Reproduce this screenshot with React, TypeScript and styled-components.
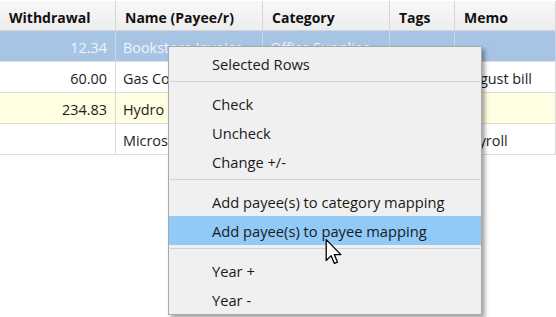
import React from "react";
import styled, { createGlobalStyle } from "styled-components";

const Global = createGlobalStyle`
  html, body { margin: 0; padding: 0; background: #ffffff; }
  body { font-family: "Open Sans", "Noto Sans", sans-serif; color: #1e1e1e; }
  * { box-sizing: border-box; }
`;

const Page = styled.div`
  position: relative;
  width: 556px;
  height: 317px;
  overflow: hidden;
  padding-top: 1px;
  background: #ffffff;
`;

const Grid = styled.div`
  display: grid;
  grid-template-columns: 116px 147px 127px 65px 1fr;
`;

const HeadCell = styled.div`
  height: 30px;
  display: flex;
  align-items: center;
  padding: 3px 0 0 9px;
  font-weight: 700;
  font-size: 14px;
  color: #111;
  background: linear-gradient(#f8f8f8, #ededed);
  border-right: 1px solid #d5d5d5;
  border-bottom: 1px solid #d5d5d5;
  white-space: nowrap;
`;

type Tone = "selected" | "plain" | "yellow";

const bg: Record<Tone, string> = {
  selected: "#a7c4e5",
  plain: "#ffffff",
  yellow: "#fffde2",
};

const Cell = styled.div<{ $tone: Tone; $num?: boolean }>`
  height: 31px;
  display: flex;
  align-items: center;
  justify-content: ${(p) => (p.$num ? "flex-end" : "flex-start")};
  padding: ${(p) => (p.$num ? "3px 8px 0 0" : "3px 0 0 7px")};
  font-size: 14.4px;
  white-space: nowrap;
  overflow: hidden;
  background: ${(p) => bg[p.$tone]};
  color: ${(p) => (p.$tone === "selected" ? "#eef4fb" : "#1e1e1e")};
  border-right: 1px solid ${(p) => (p.$tone === "selected" ? "#c4d7ee" : "#d9d9d9")};
  border-bottom: 1px solid #dcdcdc;
`;

const Menu = styled.div`
  position: absolute;
  left: 168px;
  top: 46px;
  width: 314px;
  background: #f0f0f0;
  border: 1px solid #a8a8a8;
  padding: 2px 0 0;
  box-shadow: 3px 3px 4px rgba(0, 0, 0, 0.35);
  font-size: 14.7px;
  color: #1a1a1a;
`;

const Item = styled.div<{ $hover?: boolean }>`
  height: 29px;
  display: flex;
  align-items: center;
  padding-left: 43px;
  white-space: nowrap;
  background: ${(p) => (p.$hover ? "#91c9f7" : "transparent")};
`;

const Sep = styled.div`
  height: 1px;
  margin: 3px 1px 7px;
  background: #d2d2d2;
`;

const Cursor = styled.svg`
  position: absolute;
  left: 325px;
  top: 239px;
`;

const rows: { tone: Tone; w: string; name: string; cat: string; tags: string; memo: string }[] = [
  { tone: "selected", w: "12.34", name: "Bookstore Invoice", cat: "Office Supplies", tags: "", memo: "" },
  { tone: "plain", w: "60.00", name: "Gas Company", cat: "Utilities", tags: "", memo: "August bill" },
  { tone: "yellow", w: "234.83", name: "Hydro One", cat: "Utilities", tags: "", memo: "" },
  { tone: "plain", w: "", name: "Microsoft", cat: "Salary", tags: "", memo: "Payroll" },
];

export default function App() {
  return (
    <Page>
      <Global />
      <Grid>
        <HeadCell>Withdrawal</HeadCell>
        <HeadCell>Name (Payee/r)</HeadCell>
        <HeadCell>Category</HeadCell>
        <HeadCell>Tags</HeadCell>
        <HeadCell>Memo</HeadCell>
        {rows.map((r, i) => (
          <React.Fragment key={i}>
            <Cell $tone={r.tone} $num>{r.w}</Cell>
            <Cell $tone={r.tone}>{r.name}</Cell>
            <Cell $tone={r.tone}>{r.cat}</Cell>
            <Cell $tone={r.tone}>{r.tags}</Cell>
            <Cell $tone={r.tone}>{r.memo}</Cell>
          </React.Fragment>
        ))}
      </Grid>
      <Menu>
        <Item>Selected Rows</Item>
        <Sep />
        <Item>Check</Item>
        <Item>Uncheck</Item>
        <Item>Change +/-</Item>
        <Sep />
        <Item>Add payee(s) to category mapping</Item>
        <Item $hover>Add payee(s) to payee mapping</Item>
        <Sep />
        <Item>Year +</Item>
        <Item>Year -</Item>
      </Menu>
      <Cursor width="18" height="26" viewBox="0 0 13 20">
        <path
          d="M0.5 0.5 L0.5 16.5 L4.3 12.8 L6.8 18.8 L9.2 17.8 L6.7 12 L11.8 12 Z"
          fill="#ffffff"
          stroke="#000000"
          strokeWidth="1"
          strokeLinejoin="round"
        />
      </Cursor>
    </Page>
  );
}
